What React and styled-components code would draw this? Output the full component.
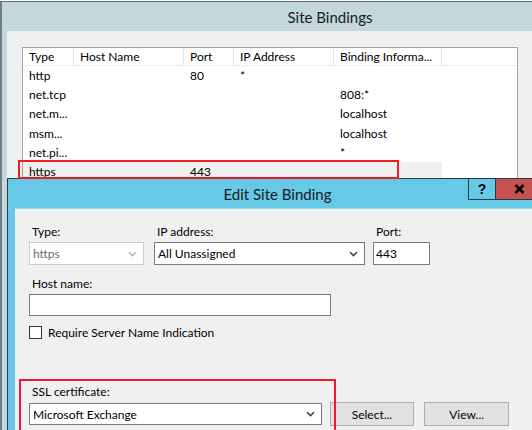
import React from 'react';
import styled, { createGlobalStyle } from 'styled-components';

const GlobalStyle = createGlobalStyle`
  html, body {
    margin: 0;
    padding: 0;
    background: #ffffff;
  }
  body {
    font-family: Lato, "Liberation Sans", sans-serif;
    font-size: 12px;
    color: #000;
  }
`;

const columns = [51, 110, 50, 100, 108];
const headers = ['Type', 'Host Name', 'Port', 'IP Address', 'Binding Informa...'];

const bindings = [
  ['http', '', '80', '*', ''],
  ['net.tcp', '', '', '', '808:*'],
  ['net.m...', '', '', '', 'localhost'],
  ['msm...', '', '', '', 'localhost'],
  ['net.pi...', '', '', '', '*'],
  ['https', '', '443', '', ''],
];

const Chevron = ({ disabled }) => (
  <svg width="9" height="6" viewBox="0 0 9 6">
    <path
      d="M1 1.2 L4.5 4.6 L8 1.2"
      fill="none"
      stroke={disabled ? '#b4b4b4' : '#404040'}
      strokeWidth="1.5"
    />
  </svg>
);

const App = () => {
  return (
    <>
      <GlobalStyle />
      <Desktop>
        <BackWindow>
          <TitleBar $height={29}>
            <span />
            <Title>Site Bindings</Title>
            <span />
          </TitleBar>
          <BackClient>
            <ListBox>
              <HeaderRow>
                {headers.map((h) => (
                  <HeaderCell key={h}>{h}</HeaderCell>
                ))}
              </HeaderRow>
              {bindings.map((row, i) => (
                <Row key={i} $selected={row[0] === 'https'}>
                  {row.map((cell, j) => (
                    <Cell key={j}>{cell}</Cell>
                  ))}
                </Row>
              ))}
            </ListBox>
          </BackClient>
        </BackWindow>

        <FrontWindow>
          <TitleBar $height={29}>
            <span />
            <Title>Edit Site Binding</Title>
            <Caption>
              <HelpButton>?</HelpButton>
              <CloseButton>
                <svg width="11" height="10" viewBox="0 0 11 10">
                  <path d="M1.5 1 L9.5 9 M9.5 1 L1.5 9" stroke="#000" strokeWidth="2.6" />
                </svg>
              </CloseButton>
            </Caption>
          </TitleBar>
          <FrontClient>
            <FieldRow>
              <Field $width={115}>
                <Label>Type:</Label>
                <Combo $disabled>
                  <span>https</span>
                  <Chevron disabled />
                </Combo>
              </Field>
              <Field $width={211} $gap={10}>
                <Label>IP address:</Label>
                <Combo>
                  <span>All Unassigned</span>
                  <Chevron />
                </Combo>
              </Field>
              <Field $width={57} $gap={8}>
                <Label>Port:</Label>
                <TextBox $height={23}>443</TextBox>
              </Field>
            </FieldRow>

            <Field $width={302} $top={11}>
              <Label>Host name:</Label>
              <TextBox $height={22} />
            </Field>

            <CheckRow>
              <CheckBox />
              <span>Require Server Name Indication</span>
            </CheckRow>

            <Field $width={480} $top={44}>
              <Label>SSL certificate:</Label>
              <CertRow>
                <Combo $width={297} $height={22}>
                  <span>Microsoft Exchange</span>
                  <Chevron />
                </Combo>
                <Button $gap={8}>Select...</Button>
                <Button $gap={10}>View...</Button>
              </CertRow>
            </Field>
          </FrontClient>
        </FrontWindow>

        {/* red annotation boxes drawn over both windows */}
        <Highlight $left={18} $top={160} $width={377} $height={15} />
        <Highlight $left={19} $top={379} $width={313} $height={50} />
      </Desktop>
    </>
  );
};

export default App;

const Desktop = styled.div`
  position: relative;
  width: 532px;
  height: 430px;
  overflow: hidden;
  background: #ffffff;
`;

const BackWindow = styled.div`
  position: absolute;
  left: 0;
  top: 1px;
  width: 658px;
  height: 520px;
  box-sizing: border-box;
  border-left: 2px solid #6f7d84;
  border-top: 1px solid #5f6d74;
  background: #c4d7dd;
  display: flex;
  flex-direction: column;
`;

const TitleBar = styled.div`
  height: ${(p) => p.$height}px;
  flex: none;
  display: grid;
  grid-template-columns: 1fr auto 1fr;
  align-items: start;
`;

const Title = styled.div`
  font-size: 15px;
  padding-top: 6px;
  color: #1a1a1a;
  white-space: nowrap;
`;

const BackClient = styled.div`
  flex: 1;
  margin-left: 5px;
  background: #f0f0f0;
  padding: 16px 0 0 15px;
`;

const ListBox = styled.div`
  width: 496px;
  height: 400px;
  box-sizing: border-box;
  border: 1px solid #a3a3a3;
  background: #ffffff;
`;

const gridColumns = columns.map((c) => `${c}px`).join(' ');

const HeaderRow = styled.div`
  display: grid;
  grid-template-columns: ${gridColumns};
  height: 18px;
  box-sizing: border-box;
  border-bottom: 1px solid #ececec;
`;

const HeaderCell = styled.div`
  box-sizing: border-box;
  border-right: 1px solid #e3e3e3;
  padding-left: 6px;
  line-height: 17px;
  white-space: nowrap;
  overflow: hidden;
`;

const Row = styled.div`
  display: grid;
  grid-template-columns: ${gridColumns};
  width: max-content;
  height: 19.2px;
  background: ${(p) => (p.$selected ? '#f0f0f0' : 'transparent')};
`;

const Cell = styled.div`
  padding-left: 6px;
  line-height: 19.2px;
  white-space: nowrap;
`;

const Highlight = styled.div`
  position: absolute;
  left: ${(p) => p.$left}px;
  top: ${(p) => p.$top}px;
  width: ${(p) => p.$width}px;
  height: ${(p) => p.$height}px;
  border: 2px solid #ed1c24;
  pointer-events: none;
`;

const FrontWindow = styled.div`
  position: absolute;
  left: 7px;
  top: 178px;
  width: 540px;
  height: 300px;
  box-sizing: border-box;
  border-left: 1px solid #2b3a42;
  border-top: 1px solid #2b3a42;
  background: #66c9e8;
  display: flex;
  flex-direction: column;
`;

const Caption = styled.div`
  justify-self: end;
  display: flex;
  margin-right: 5px;
`;

const HelpButton = styled.div`
  width: 28px;
  height: 21px;
  box-sizing: border-box;
  border: 1px solid #2b3a42;
  border-top: none;
  display: flex;
  align-items: center;
  justify-content: center;
  font-family: "Liberation Sans", sans-serif;
  font-weight: bold;
  font-size: 14px;
`;

const CloseButton = styled.div`
  width: 46px;
  height: 21px;
  box-sizing: border-box;
  border-bottom: 1px solid #2b3a42;
  background: #c75050;
  display: flex;
  align-items: center;
  justify-content: center;
`;

const FrontClient = styled.div`
  flex: 1;
  margin-left: 7px;
  background: #f0f0f0;
  border-top: 1px solid #a4d9ea;
  padding: 15px 0 0 14px;
  display: flex;
  flex-direction: column;
  align-items: flex-start;
`;

const FieldRow = styled.div`
  display: flex;
`;

const Field = styled.div`
  display: flex;
  flex-direction: column;
  width: ${(p) => p.$width}px;
  margin-left: ${(p) => p.$gap || 0}px;
  margin-top: ${(p) => p.$top || 0}px;
`;

const Label = styled.div`
  line-height: 15px;
  padding-left: 3px;
  margin-bottom: 3px;
  white-space: nowrap;
`;

const Combo = styled.div`
  box-sizing: border-box;
  height: ${(p) => p.$height || 23}px;
  width: ${(p) => (p.$width ? `${p.$width}px` : 'auto')};
  border: 1px solid ${(p) => (p.$disabled ? '#cccccc' : '#7a7a7a')};
  background: #ffffff;
  color: ${(p) => (p.$disabled ? '#6d6d6d' : '#000')};
  display: flex;
  align-items: center;
  justify-content: space-between;
  padding: 0 6px 0 3px;
`;

const TextBox = styled.div`
  box-sizing: border-box;
  height: ${(p) => p.$height}px;
  border: 1px solid #7a7a7a;
  background: #ffffff;
  padding-left: 2px;
  line-height: ${(p) => p.$height - 2}px;
`;

const CheckRow = styled.div`
  display: flex;
  align-items: center;
  gap: 6px;
  margin-top: 9px;
  line-height: 15px;
`;

const CheckBox = styled.div`
  width: 13px;
  height: 13px;
  box-sizing: border-box;
  border: 1px solid #333333;
  background: #ffffff;
`;

const CertRow = styled.div`
  display: flex;
  align-items: center;
`;

const Button = styled.div`
  box-sizing: border-box;
  width: 86px;
  height: 24px;
  margin-left: ${(p) => p.$gap}px;
  border: 1px solid #adadad;
  background: #e1e1e1;
  display: flex;
  align-items: center;
  justify-content: center;
`;
